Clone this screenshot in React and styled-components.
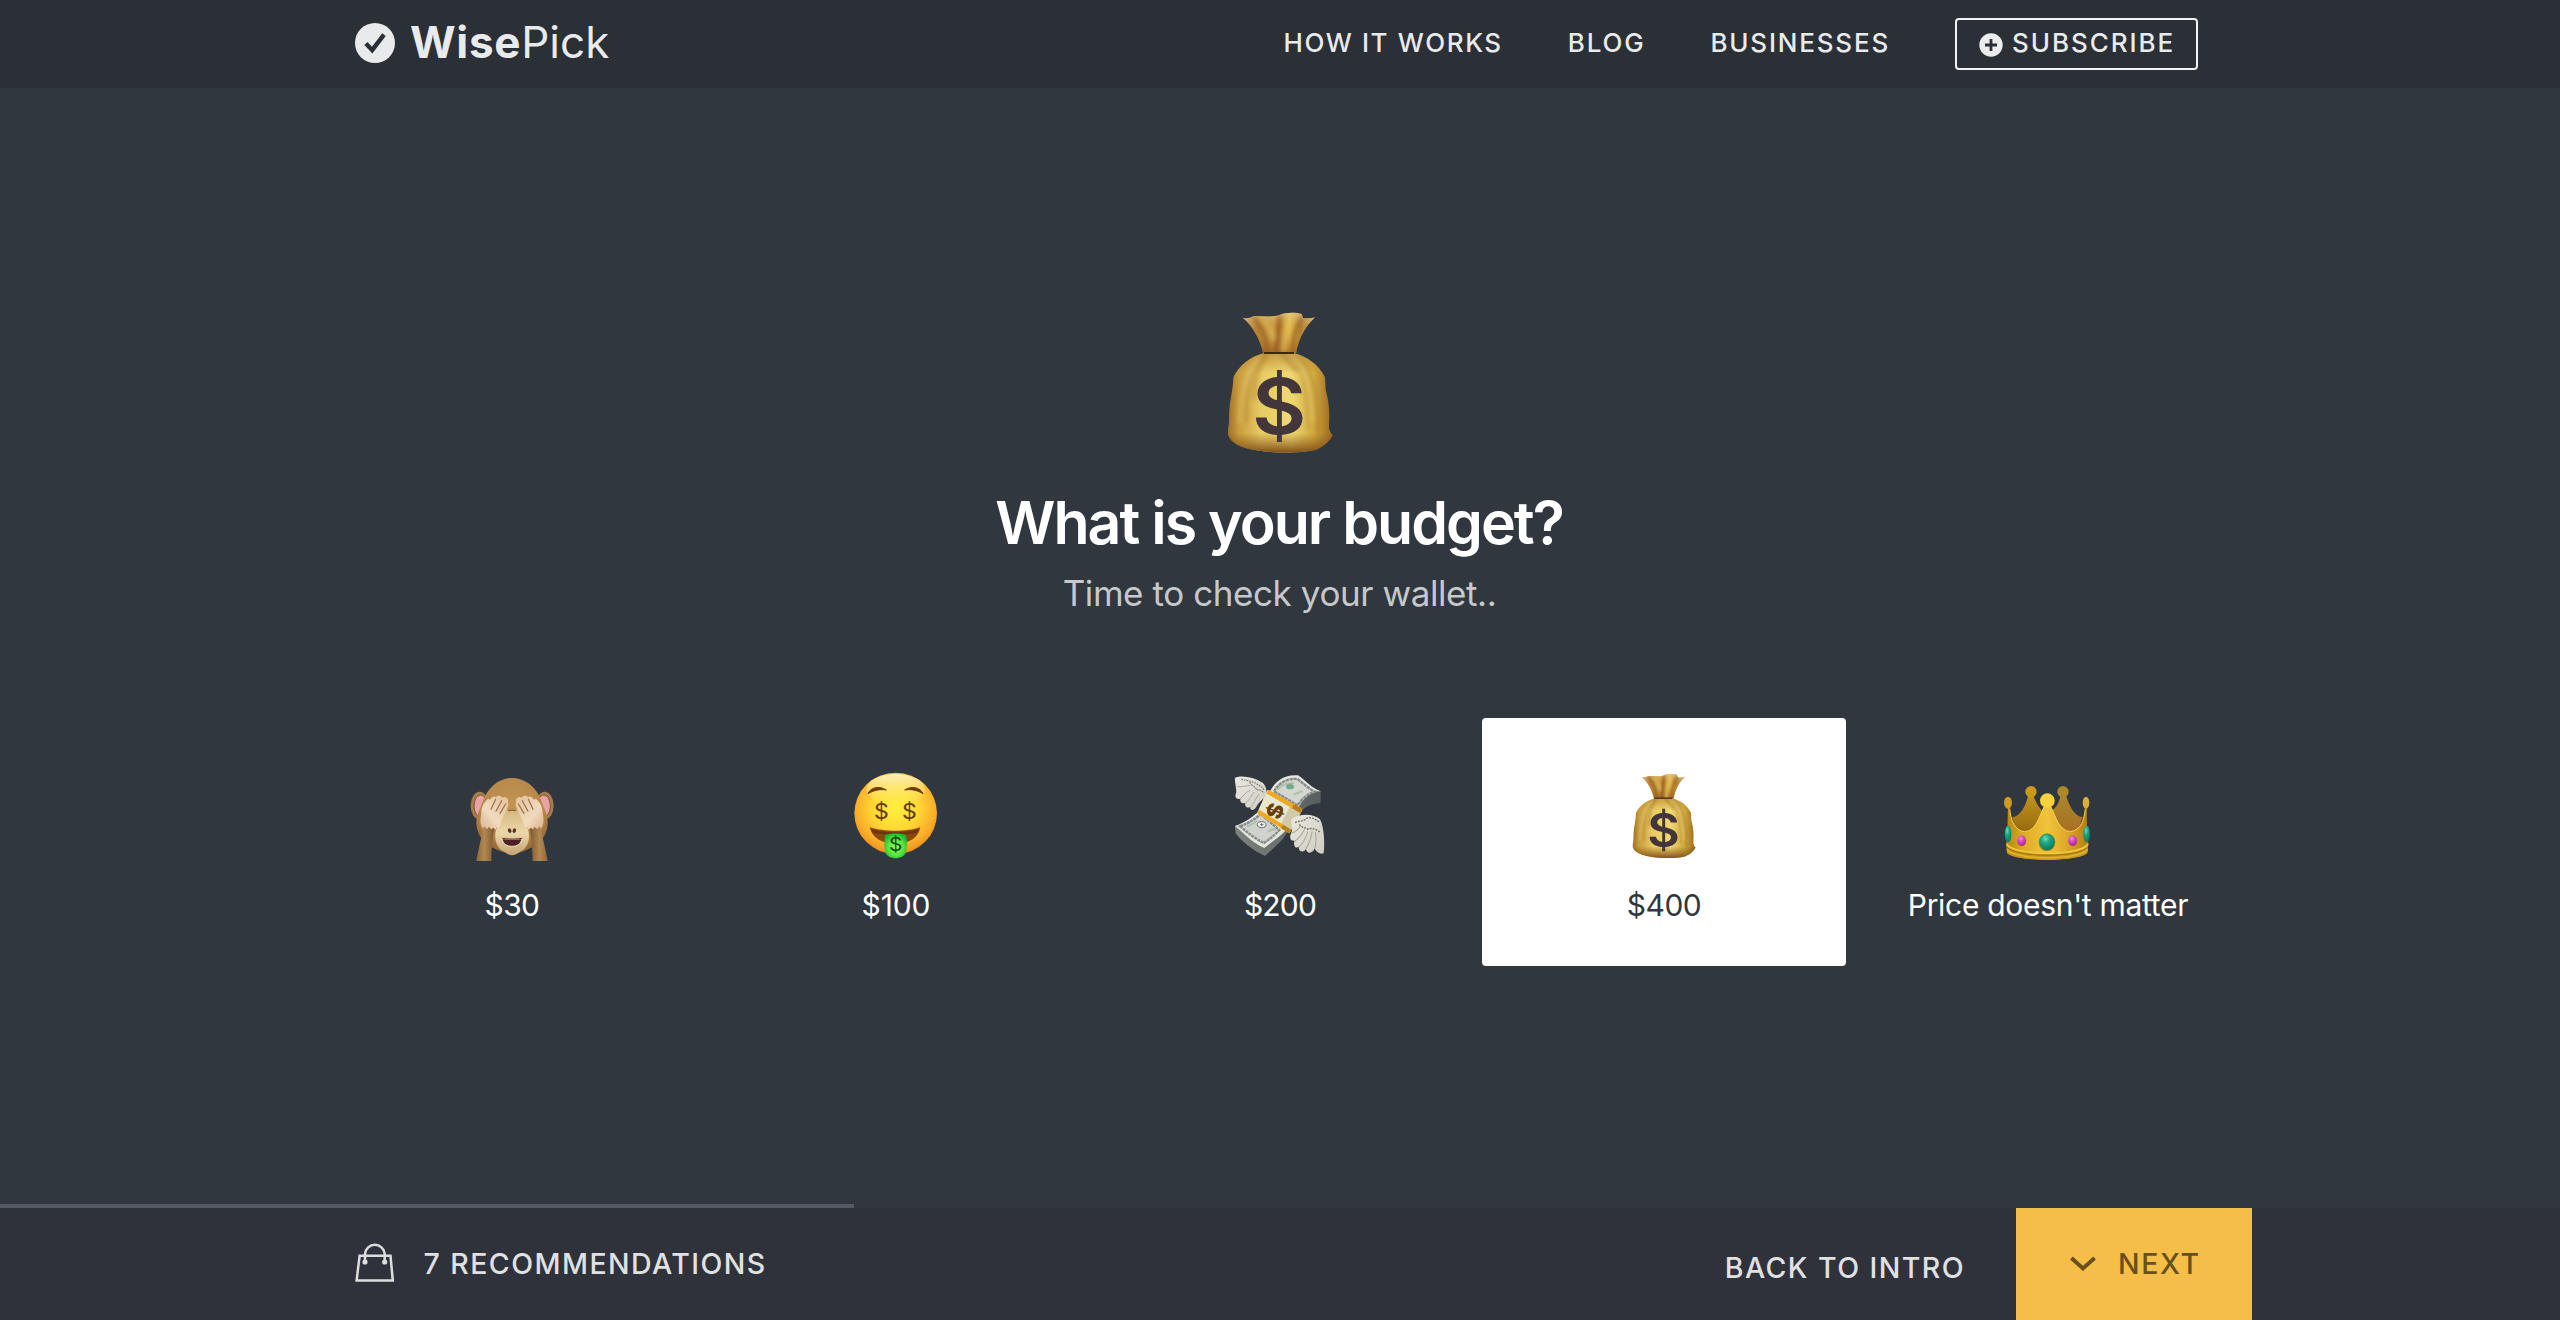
import React, { useId } from "react";
import styled, { createGlobalStyle } from "styled-components";

const GlobalStyle = createGlobalStyle`
  *, *::before, *::after { box-sizing: border-box; }
  body {
    margin: 0;
    background: #30373f;
    font-family: Inter, "Liberation Sans", sans-serif;
    color: #fff;
  }
`;

/* ---------- layout ---------- */

const Page = styled.div`
  display: flex;
  flex-direction: column;
  height: 1320px;
  width: 100%;
  overflow: hidden;
`;

const Header = styled.header`
  display: flex;
  align-items: center;
  justify-content: space-between;
  height: 88px;
  padding: 0 362px 0 355px;
  background: #2b2f36;
  color: #e9eaeb;
`;

const Brand = styled.a`
  display: flex;
  align-items: center;
  gap: 15px;
  padding-bottom: 2px;
`;

const BrandName = styled.span`
  display: flex;
  font-size: 44px;
  line-height: 54px;
  padding-bottom: 2px;
`;

const BrandPart = styled.span`
  font-weight: ${(p) => (p.$bold ? 700 : 400)};
  letter-spacing: ${(p) => (p.$bold ? "0.7px" : "0")};
`;

const Nav = styled.nav`
  display: flex;
  align-items: center;
  gap: 65px;
`;

const NavText = styled.span`
  font-size: 26px;
  font-weight: 550;
  line-height: 32px;
  padding-bottom: 2px;
  letter-spacing: ${(p) => p.$spacing}px;
`;

const SubscribeButton = styled.div`
  display: flex;
  align-items: center;
  gap: 9px;
  width: 243px;
  height: 52px;
  padding-left: 22px;
  border: 2px solid #f1f2f2;
  border-radius: 4px;
`;

const PlusBadge = styled.svg`
  display: block;
  flex: none;
  margin-top: 2px;
`;

const Main = styled.main`
  display: flex;
  flex-direction: column;
  align-items: center;
  flex: 1;
  padding-top: 218px;
`;

const Title = styled.h1`
  margin: 28px 0 0;
  padding-right: 2px;
  font-size: 59px;
  font-weight: 600;
  line-height: 73px;
  letter-spacing: -1.97px;
`;

const Subtitle = styled.p`
  margin: 12px 0 0;
  padding-right: 1px;
  font-size: 35px;
  line-height: 44px;
  letter-spacing: -0.42px;
  color: #c6c8ca;
`;

const Options = styled.div`
  display: grid;
  grid-template-columns: repeat(5, 364px);
  gap: 20px;
  margin-top: 103px;
`;

const Option = styled.div`
  display: flex;
  flex-direction: column;
  align-items: center;
  height: 248px;
  padding-top: 48px;
  border-radius: 4px;
  background: ${(p) => (p.$selected ? "#ffffff" : "transparent")};
  color: ${(p) => (p.$selected ? "#30373f" : "#ffffff")};
`;

const OptionLabel = styled.span`
  margin-top: 19px;
  font-size: 30px;
  line-height: 40px;
  letter-spacing: ${(p) => p.$spacing}px;
`;

const Drawing = styled.svg`
  display: block;
  flex: none;
`;

const ProgressTrack = styled.div`
  height: 4px;
`;

const ProgressFill = styled.div`
  width: 854px;
  height: 4px;
  background: #525a63;
`;

const Footer = styled.footer`
  display: flex;
  align-items: center;
  height: 112px;
  padding: 0 308px 0 355px;
  background: #2f323b;
  color: #e0e1e2;
`;

const Recommendations = styled.div`
  display: flex;
  align-items: center;
  gap: 28.5px;
  margin-right: auto;
`;

const FooterText = styled.span`
  font-size: 28.5px;
  font-weight: 550;
  line-height: 36px;
  letter-spacing: ${(p) => p.$spacing}px;
`;

const BackLink = styled.a`
  display: flex;
  padding-top: 8px;
  margin-right: 51px;
`;

const NextButton = styled.div`
  display: flex;
  align-items: center;
  gap: 22px;
  width: 236px;
  height: 112px;
  padding-left: 54px;
  background: #f5be48;
  color: #68501c;
`;

/* ---------- interface icons ---------- */

const CheckLogo = () => (
  <Drawing width="40" height="40" viewBox="0 0 40 40">
    <circle cx="20" cy="20" r="20" fill="#e9eaeb" />
    <path d="M10.9 20.4L17.2 27L29 11.6" fill="none" stroke="#2b2f36" strokeWidth="4.4" />
  </Drawing>
);

const PlusIcon = () => (
  <PlusBadge width="24" height="24" viewBox="0 0 24 24">
    <circle cx="12" cy="12" r="11.7" fill="#ececed" />
    <path d="M12 6v12M6 12h12" stroke="#2b2f36" strokeWidth="2.8" />
  </PlusBadge>
);

const BagIcon = () => (
  <Drawing width="40" height="44" viewBox="0 0 40 44" fill="none" stroke="#dcdddd" strokeWidth="2.5">
    <path d="M4.6 13.8H35.5L37.8 38.6H1.6Z" />
    <path d="M10 19.7V12A9.9 10.2 0 0 1 29.7 12V19.7" />
    <circle cx="10" cy="20" r="2.6" fill="#dcdddd" stroke="none" />
    <circle cx="29.7" cy="20" r="2.6" fill="#dcdddd" stroke="none" />
  </Drawing>
);

const ChevronIcon = () => (
  <Drawing width="26" height="16" viewBox="0 0 26 16">
    <path d="M1.4 2L13 12.4L24.6 2" fill="none" stroke="#68501c" strokeWidth="4" />
  </Drawing>
);

/* ---------- emoji illustrations ---------- */

function MoneyBag({ width, height, viewBox }) {
  const id = useId();
  const ref = (name) => `url(#${id}${name})`;
  const body =
    "M192 190C150 200 116 228 100 262C99 300 90 328 88 360C86 388 89 402 84 414V434C92 458 120 472 165 480C220 490 300 490 345 480C370 472 391 452 398 436C391 427 386 420 387 405C389 370 388 336 377 300L375 262C355 222 320 199 282 190Z";
  const neck =
    "M128 83C140 87 150 84 160 79C185 76 210 84 238 75C255 67 287 67 305 72L309 84C322 86 335 85 345 82C318 108 297 142 288 190H190C180 145 155 105 128 83Z";
  return (
    <Drawing width={width} height={height} viewBox={viewBox} aria-hidden="true">
      <defs>
        <linearGradient id={`${id}b`} x1="0" x2="1">
          <stop offset="0" stopColor="#a07026" />
          <stop offset=".1" stopColor="#c99c3d" />
          <stop offset=".32" stopColor="#e8cc65" />
          <stop offset=".6" stopColor="#efd873" />
          <stop offset=".82" stopColor="#d2ab3f" />
          <stop offset="1" stopColor="#98651f" />
        </linearGradient>
        <linearGradient id={`${id}s`} x2="0" y2="1">
          <stop offset="0" stopColor="#a8701c" stopOpacity=".55" />
          <stop offset=".2" stopColor="#a8701c" stopOpacity="0" />
          <stop offset=".8" stopColor="#8d5a18" stopOpacity="0" />
          <stop offset="1" stopColor="#7c4b17" stopOpacity=".95" />
        </linearGradient>
        <linearGradient id={`${id}n`} x1="0" x2="1">
          <stop offset="0" stopColor="#caa477" />
          <stop offset=".2" stopColor="#b27b30" />
          <stop offset=".42" stopColor="#c8963c" />
          <stop offset=".5" stopColor="#a9702a" />
          <stop offset=".65" stopColor="#dfb548" />
          <stop offset=".8" stopColor="#b17a31" />
          <stop offset="1" stopColor="#c9a478" />
        </linearGradient>
        <linearGradient id={`${id}t`} x2="0" y2="1">
          <stop offset="0" stopColor="#e9d29b" stopOpacity=".65" />
          <stop offset=".35" stopColor="#d9b14a" stopOpacity=".15" />
          <stop offset="1" stopColor="#8c4f18" stopOpacity=".65" />
        </linearGradient>
        <filter id={`${id}f`} x="-60%" y="-20%" width="220%" height="140%">
          <feGaussianBlur stdDeviation="6" />
        </filter>
        <clipPath id={`${id}c`}><path d={body} /></clipPath>
        <clipPath id={`${id}k`}><path d={neck} /></clipPath>
      </defs>
      <path d={body} fill={ref("b")} />
      <path d={body} fill={ref("s")} />
      <g clipPath={ref("c")} fill="none">
        <g filter={ref("f")}>
          <path d="M196 196C160 225 136 290 140 400" stroke="#aa7a2a" strokeWidth="9" opacity=".5" />
          <path d="M205 192C178 225 165 260 162 330" stroke="#a8741f" strokeWidth="9" opacity=".5" />
          <path d="M178 205C150 235 123 280 118 400" stroke="#edd080" strokeWidth="8" opacity=".5" />
          <path d="M268 192C295 220 322 260 326 420" stroke="#a8772a" strokeWidth="8" opacity=".45" />
          <path d="M245 192C262 205 270 222 290 245" stroke="#a06b20" strokeWidth="9" opacity=".55" />
          <path d="M285 194C325 225 350 280 352 430" stroke="#a26d27" strokeWidth="9" opacity=".5" />
          <path d="M276 196C315 228 334 270 338 400" stroke="#f0d97f" strokeWidth="7" opacity=".5" />
        </g>
      </g>
      <path d={neck} fill={ref("n")} />
      <path d={neck} fill={ref("t")} />
      <g clipPath={ref("k")} fill="none">
        <g filter={ref("f")}>
          <path d="M160 82C185 110 200 145 204 188" stroke="#8e5220" strokeWidth="9" opacity=".75" />
          <path d="M240 78C238 120 228 150 228 188" stroke="#8a5020" strokeWidth="7" opacity=".85" />
          <path d="M308 82C288 112 278 145 275 188" stroke="#8e5523" strokeWidth="9" opacity=".75" />
          <path d="M272 76C262 115 252 150 250 188" stroke="#ecc65a" strokeWidth="14" opacity=".7" />
          <path d="M190 86C210 110 216 130 220 150" stroke="#e5c765" strokeWidth="12" opacity=".6" />
        </g>
      </g>
      <path d="M192 186H282V192H192Z" fill="#3b2616" />
      <text
        transform="translate(237.5 431.5) scale(1.08 1)"
        textAnchor="middle"
        fontFamily="Inter, sans-serif"
        fontWeight="600"
        fontSize="232"
        fill="#42363a"
      >
        $
      </text>
    </Drawing>
  );
}

function Monkey() {
  const arm = "M98 215C98 248 84 290 77 333H122C122 300 126 265 131 238L130 210Z";
  const hand =
    "M96 236C88 224 88 208 92 192C91 176 98 160 106 153C110 147 116 146 119 149C122 140 130 136 135 142C140 136 150 135 154 143C161 138 175 143 172 156C174 162 173 170 168 178C161 194 156 205 150 220C147 232 142 236 138 232L134 239L128 233L122 238L115 231L108 238L103 229Z";
  const lines = "M121 178L135 148M136 184L153 152M148 190L165 162";
  const Side = ({ flip }) => (
    <g transform={flip ? "translate(368 0) scale(-1 1)" : undefined}>
      <path d={arm} fill="url(#mk-arm)" />
      <path d={hand} fill="url(#mk-hand)" />
      <path d={lines} fill="none" stroke="#9a6a45" strokeWidth="3.4" strokeLinecap="round" />
    </g>
  );
  return (
    <Drawing width="90" height="100" viewBox="49 48 270 300" aria-hidden="true">
      <defs>
        <radialGradient id="mk-head" cx=".5" cy=".35" r=".65">
          <stop offset="0" stopColor="#c19554" />
          <stop offset=".7" stopColor="#b68748" />
          <stop offset="1" stopColor="#926735" />
        </radialGradient>
        <linearGradient id="mk-arm" x1="0" x2="1">
          <stop offset="0" stopColor="#8f673a" />
          <stop offset=".45" stopColor="#b18852" />
          <stop offset="1" stopColor="#7d5730" />
        </linearGradient>
        <linearGradient id="mk-hand" x1="0" x2="1" y1="1" y2="0">
          <stop offset="0" stopColor="#d9b28c" />
          <stop offset=".4" stopColor="#f0dac0" />
          <stop offset="1" stopColor="#e2c19a" />
        </linearGradient>
        <linearGradient id="mk-face" x2="0" y2="1">
          <stop offset="0" stopColor="#d6b67d" />
          <stop offset=".5" stopColor="#ead8aa" />
          <stop offset="1" stopColor="#c3a274" />
        </linearGradient>
      </defs>
      <ellipse cx="87" cy="167" rx="27" ry="42" fill="#a87c49" />
      <ellipse cx="282" cy="167" rx="27" ry="42" fill="#a87c49" />
      <ellipse cx="90" cy="168" rx="20" ry="33" fill="#e8a3a4" stroke="#7d5733" strokeWidth="3" />
      <ellipse cx="279" cy="168" rx="20" ry="33" fill="#e8a3a4" stroke="#7d5733" strokeWidth="3" />
      <path d="M77 222C76 200 85 182 95 158C110 112 145 84 184 84C223 84 260 112 274 158C284 182 292 200 291 222C289 262 262 285 232 298C202 314 166 314 136 298C106 285 80 262 77 222Z" fill="url(#mk-head)" />
      <path d="M184 184C160 172 148 190 145 215C138 235 134 242 134 262C134 280 144 298 158 304C170 312 176 316 184 316C192 316 200 312 211 304C225 298 234 280 235 262C235 242 231 235 224 215C220 190 208 172 184 184Z" fill="url(#mk-face)" />
      <path d="M172 183Q184 178 196 183" fill="none" stroke="#8a6239" strokeWidth="4" />
      <ellipse cx="177" cy="242" rx="5" ry="7" fill="#54321f" transform="rotate(-22 177 242)" />
      <ellipse cx="191" cy="242" rx="5" ry="7" fill="#54321f" transform="rotate(22 191 242)" />
      <path d="M154 266C170 268 198 268 214 266C211 282 199 289 184 289C169 289 157 282 154 266Z" fill="#4e2024" stroke="#f3e6bd" strokeWidth="3" />
      <path d="M155 265C172 268 197 268 214 265" fill="none" stroke="#5b2c23" strokeWidth="3" />
      <Side />
      <Side flip />
    </Drawing>
  );
}

function MoneyFace() {
  return (
    <Drawing width="90" height="100" viewBox="63 48 270 300" aria-hidden="true">
      <defs>
        <radialGradient id="mf-face" cx=".5" cy=".42" r=".6">
          <stop offset="0" stopColor="#fff03c" />
          <stop offset=".45" stopColor="#fed935" />
          <stop offset=".78" stopColor="#fab02a" />
          <stop offset="1" stopColor="#ee8b1b" />
        </radialGradient>
        <linearGradient id="mf-top" x2="0" y2="1">
          <stop offset="0" stopColor="#fffbe0" stopOpacity=".8" />
          <stop offset="1" stopColor="#fff08a" stopOpacity="0" />
        </linearGradient>
        <radialGradient id="mf-tongue" cx=".5" cy=".55" r=".6">
          <stop offset="0" stopColor="#8dff61" />
          <stop offset=".6" stopColor="#52e33f" />
          <stop offset="1" stopColor="#1bae2c" />
        </radialGradient>
      </defs>
      <ellipse cx="197" cy="190" rx="124" ry="122" fill="url(#mf-face)" />
      <ellipse cx="197" cy="118" rx="88" ry="46" fill="url(#mf-top)" />
      <path d="M114 131C122 112 148 106 169 120C150 117 132 120 114 131Z" fill="#6e3d0b" stroke="#6e3d0b" strokeWidth="3" strokeLinejoin="round" />
      <path d="M279 131C271 112 245 106 224 120C243 117 261 120 279 131Z" fill="#6e3d0b" stroke="#6e3d0b" strokeWidth="3" strokeLinejoin="round" />
      <path d="M119 232C160 246 232 246 271 232C266 262 240 281 197 281C152 281 126 262 119 232Z" fill="#8a480f" />
      <path d="M124 238C165 250 226 250 266 238L262 248C224 257 168 257 129 248Z" fill="#61300a" opacity=".7" />
      <path d="M165 255C180 249 212 249 228 255C231 275 232 290 228 306C222 331 172 331 166 306C162 290 163 275 165 255Z" fill="url(#mf-tongue)" />
      <g fill="#67380a" fontFamily="Inter, sans-serif" fontSize="64" textAnchor="middle">
        <text transform="translate(154 208) scale(1.08 1)">$</text>
        <text transform="translate(238 208) scale(1.08 1)">$</text>
        <text transform="translate(197 304) scale(.98 .9)" fill="#174a10">$</text>
      </g>
    </Drawing>
  );
}

function WingedMoney() {
  return (
    <Drawing width="100" height="100" viewBox="60 48 300 300" aria-hidden="true">
      <defs>
        <linearGradient id="wm-side" x1="0" x2="1">
          <stop offset="0" stopColor="#7d837e" />
          <stop offset="1" stopColor="#585e5c" />
        </linearGradient>
        <linearGradient id="wm-wing" x1="0" x2="1" y2="1">
          <stop offset="0" stopColor="#eae8df" />
          <stop offset="1" stopColor="#cfccc2" />
        </linearGradient>
      </defs>
      <path d="M75 228L77 250C98 278 130 302 165 318C188 296 212 280 230 250L275 182C292 166 310 160 332 160V124L262 130L130 215Z" fill="url(#wm-side)" />
      <path d="M75 228C108 216 128 200 148 182L180 124C196 92 224 72 264 76C288 92 306 116 333 124C306 124 284 140 268 168L230 238C210 262 184 276 163 294C128 280 102 250 75 228Z" fill="#e4e5dc" />
      <path d="M90 229C120 218 136 205 152 192L208 240C192 258 178 268 162 279C132 264 112 247 90 229Z" fill="#d0d2cc" stroke="#85898a" strokeWidth="7" strokeDasharray="9 2" />
      <path d="M192 124C206 100 230 84 262 87C282 101 297 117 315 125C292 132 276 146 263 166Z" fill="#d4d6cf" stroke="#85898a" strokeWidth="7" strokeDasharray="10 2" />
      <path d="M202 119C215 105 230 98 252 99M110 230C124 224 134 219 141 212M174 245C184 240 190 234 197 240M250 134L278 123" fill="none" stroke="#a9c1a8" strokeWidth="6" />
      <ellipse cx="240" cy="110" rx="12" ry="8" fill="#75aa8b" />
      <ellipse cx="155" cy="224" rx="13" ry="9" fill="#f0f0e7" stroke="#646b6c" strokeWidth="3" />
      <path d="M151 224h9M155 220v8" stroke="#565e60" strokeWidth="3" />
      <path d="M172 120L277 180L238 250L141 190Z" fill="#ebe6cc" />
      <path d="M244 161L277 180L238 250L208 231Z" fill="#c5bc9b" opacity=".7" />
      <path d="M176 119L277 176L271 189L170 131Z" fill="#efa820" />
      <path d="M147 179L244 239L238 250L141 190Z" fill="#efa820" />
      <path d="M252 163L277 176L271 189L246 175ZM219 224L244 239L238 250L213 235Z" fill="#b87d1c" />
      <text transform="translate(216 191) rotate(-70) scale(1.15 1.05)" textAnchor="middle" fontFamily="Inter, sans-serif" fontWeight="800" fontSize="60" fill="#66410e">$</text>
      <path d="M75 83C95 75 130 80 158 98C170 110 172 125 166 140C155 150 145 158 138 172C132 183 121 182 120 172C112 175 103 170 106 158C98 162 89 158 91 146C80 150 73 142 78 130C82 122 73 95 75 83Z" fill="url(#wm-wing)" />
      <path d="M82 110C96 112 110 106 121 106M91 146C101 137 108 126 120 121M106 160C120 150 124 134 133 126M121 174C130 160 138 144 148 132" fill="none" stroke="#aba9a1" strokeWidth="3" />
      <path d="M94 88C112 92 132 94 143 104C151 109 158 110 162 121M119 97C125 108 138 110 140 120C150 116 157 124 162 130" fill="none" stroke="#77766f" strokeWidth="3.5" strokeDasharray="5 3" />
      <path d="M245 207C270 190 310 190 330 208C342 230 345 280 341 310C330 314 318 305 314 295C308 312 290 312 288 297C280 310 265 305 266 290C256 298 249 285 254 272C240 275 238 260 243 250C252 235 240 220 245 207Z" fill="url(#wm-wing)" />
      <path d="M244 250C255 248 262 240 271 230M254 274C267 266 277 250 284 238M267 291C282 280 288 260 294 244M288 296C298 280 304 262 306 244M314 295C320 278 318 258 316 246" fill="none" stroke="#aaa79d" strokeWidth="3.2" />
      <path d="M255 218C268 212 280 215 290 205C303 200 314 206 328 216M268 223C274 235 286 230 293 238C305 232 318 238 330 246" fill="none" stroke="#77756c" strokeWidth="4" strokeDasharray="6 3" />
    </Drawing>
  );
}

function Crown() {
  return (
    <Drawing width="100" height="100" viewBox="324 18 300 300" aria-hidden="true">
      <defs>
        <linearGradient id="cr-front" x1="0" x2="1">
          <stop offset="0" stopColor="#b8860d" />
          <stop offset=".2" stopColor="#dcab24" />
          <stop offset=".5" stopColor="#f0c43a" />
          <stop offset=".72" stopColor="#e0ab2b" />
          <stop offset="1" stopColor="#b47d12" />
        </linearGradient>
        <linearGradient id="cr-back" x2="0" y2="1">
          <stop offset="0" stopColor="#c1921e" />
          <stop offset="1" stopColor="#94690e" />
        </linearGradient>
        <linearGradient id="cr-back2" x2="0" y2="1">
          <stop offset="0" stopColor="#a98729" />
          <stop offset="1" stopColor="#a86d24" />
        </linearGradient>
        <radialGradient id="cr-green" cx=".4" cy=".3" r=".7">
          <stop offset="0" stopColor="#6fe0bd" />
          <stop offset=".4" stopColor="#1ea583" />
          <stop offset="1" stopColor="#087a5b" />
        </radialGradient>
        <radialGradient id="cr-pink" cx=".4" cy=".3" r=".7">
          <stop offset="0" stopColor="#f28be0" />
          <stop offset=".5" stopColor="#d345bd" />
          <stop offset="1" stopColor="#a82794" />
        </radialGradient>
      </defs>
      <path d="M366 172C392 168 406 140 414 108H431C438 132 452 148 464 160V220H380Z" fill="url(#cr-back)" />
      <path d="M486 150C500 142 508 126 511 108H529C538 140 554 168 578 172L560 222H490Z" fill="url(#cr-back2)" />
      <circle cx="423" cy="95" r="17" fill="#cb981d" />
      <circle cx="519" cy="95" r="17" fill="#ad882a" />
      <path d="M349 250C354 215 352 175 354 138H358C361 175 372 212 404 215C438 214 448 165 462 138H483C496 165 506 212 542 215C574 210 583 175 587 138H591C590 175 590 215 595 250L592 278C570 306 374 306 351 278Z" fill="url(#cr-front)" />
      <path d="M359 146C362 180 374 213 404 215C438 214 448 168 463 140M482 140C497 168 506 213 542 215C574 210 582 180 586 146" fill="none" stroke="#f4d04d" strokeWidth="3" />
      <circle cx="472" cy="122" r="22" fill="#f7d13e" />
      <ellipse cx="354" cy="128" rx="12" ry="18" fill="#cf9a22" />
      <ellipse cx="588" cy="128" rx="10" ry="18" fill="#d8ae3c" />
      <path d="M349 249C366 290 575 292 595 249L592 279C565 306 376 306 351 279Z" fill="#c9981b" />
      <path d="M350 252C372 289 572 290 594 252" fill="none" stroke="#f1c93d" strokeWidth="5" />
      <path d="M351 268C374 302 570 302 593 268" fill="none" stroke="#edc137" strokeWidth="4" opacity=".75" />
      <path d="M351 261C374 294 570 294 593 261" fill="none" stroke="#91680e" strokeWidth="2.5" />
      <ellipse cx="354" cy="222" rx="10" ry="25" fill="url(#cr-green)" />
      <ellipse cx="590" cy="222" rx="10" ry="25" fill="url(#cr-green)" />
      <ellipse cx="471" cy="247" rx="25" ry="27" fill="#b88415" />
      <ellipse cx="471" cy="246" rx="23" ry="25" fill="url(#cr-green)" />
      <ellipse cx="395" cy="242" rx="13.5" ry="16" fill="url(#cr-pink)" />
      <ellipse cx="548" cy="242" rx="13.5" ry="16" fill="url(#cr-pink)" />
    </Drawing>
  );
}

/* ---------- data ---------- */

const links = [
  { label: "HOW IT WORKS", spacing: 1.6 },
  { label: "BLOG", spacing: 1.8 },
  { label: "BUSINESSES", spacing: 1.8 },
];

const options = [
  { label: "$30", spacing: -0.64, icon: <Monkey /> },
  { label: "$100", spacing: -0.13, icon: <MoneyFace /> },
  { label: "$200", spacing: -0.82, icon: <WingedMoney /> },
  {
    label: "$400",
    spacing: -0.52,
    selected: true,
    icon: <MoneyBag width={90} height={100} viewBox="15 28 450 500" />,
  },
  { label: "Price doesn't matter", spacing: -0.3, icon: <Crown /> },
];

export default function App() {
  return (
    <>
      <GlobalStyle />
      <Page>
        <Header>
          <Brand>
            <CheckLogo />
            <BrandName>
              <BrandPart $bold>Wise</BrandPart>
              <BrandPart>Pick</BrandPart>
            </BrandName>
          </Brand>
          <Nav>
            {links.map((link) => (
              <NavText key={link.label} $spacing={link.spacing}>{link.label}</NavText>
            ))}
            <SubscribeButton>
              <PlusIcon />
              <NavText $spacing={1.95}>SUBSCRIBE</NavText>
            </SubscribeButton>
          </Nav>
        </Header>
        <Main>
          <MoneyBag width={120} height={152} viewBox="60 48 360 456" />
          <Title>What is your budget?</Title>
          <Subtitle>Time to check your wallet..</Subtitle>
          <Options>
            {options.map((option) => (
              <Option key={option.label} $selected={option.selected}>
                {option.icon}
                <OptionLabel $spacing={option.spacing}>{option.label}</OptionLabel>
              </Option>
            ))}
          </Options>
        </Main>
        <ProgressTrack>
          <ProgressFill />
        </ProgressTrack>
        <Footer>
          <Recommendations>
            <BagIcon />
            <FooterText $spacing={1.45}>7 RECOMMENDATIONS</FooterText>
          </Recommendations>
          <BackLink>
            <FooterText $spacing={1.45}>BACK TO INTRO</FooterText>
          </BackLink>
          <NextButton>
            <ChevronIcon />
            <FooterText $spacing={1.6}>NEXT</FooterText>
          </NextButton>
        </Footer>
      </Page>
    </>
  );
}
